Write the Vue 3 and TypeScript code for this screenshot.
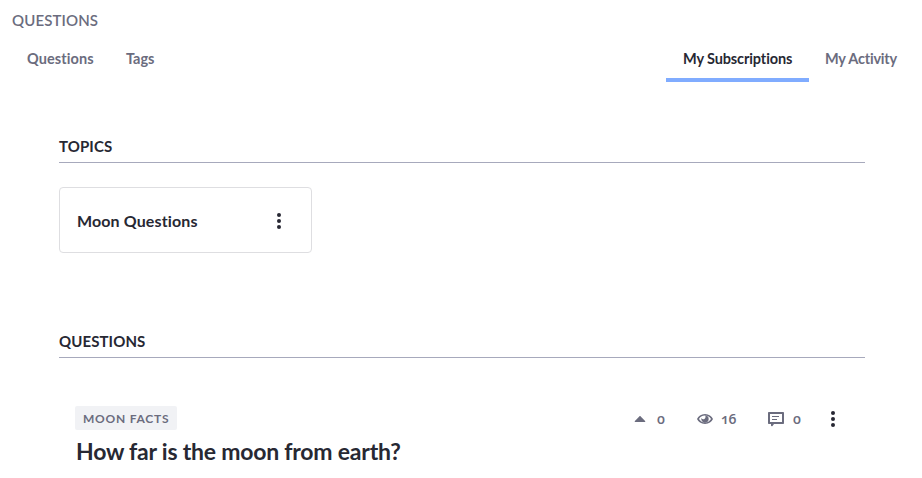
<script setup lang="ts">
interface Tab { label: string; id: string; active?: boolean }

const leftTabs: Tab[] = [
  { label: 'Questions', id: 'questions' },
  { label: 'Tags', id: 'tags' },
]
const rightTabs: Tab[] = [
  { label: 'My Subscriptions', id: 'subscriptions', active: true },
  { label: 'My Activity', id: 'activity' },
]
const topics: string[] = ['Moon Questions']
const question = {
  topic: 'MOON FACTS',
  title: 'How far is the moon from earth?',
  votes: 0,
  views: 16,
  answers: 0,
}
</script>

<template>
  <main class="page">
    <h1 class="app-title">QUESTIONS</h1>
    <nav class="tabs">
      <a v-for="t in leftTabs" :key="t.id" class="tab" :class="t.id">{{ t.label }}</a>
      <i class="spacer"></i>
      <a v-for="t in rightTabs" :key="t.id" class="tab" :class="[t.id, { active: t.active }]">{{ t.label }}</a>
    </nav>

    <section class="section">
      <h2 class="heading">TOPICS</h2>
      <article v-for="topic in topics" :key="topic" class="card">
        <strong>{{ topic }}</strong>
        <svg class="icon" viewBox="0 0 16 16"><circle cx="8" cy="2" r="2" /><circle cx="8" cy="8" r="2" /><circle cx="8" cy="14" r="2" /></svg>
      </article>
    </section>

    <section class="section questions-section">
      <h2 class="heading">QUESTIONS</h2>
      <article class="question">
        <div class="meta">
          <span class="label">{{ question.topic }}</span>
          <div class="stats">
            <span class="stat votes">
              <svg class="icon" viewBox="0 0 16 16"><path d="M7.300 5.400 2.900 9.900c-.4.5-.2 1.100.5 1.100h9.200c.7 0 .9-.6.5-1.100L8.700 5.400c-.4-.5-1-.5-1.400 0Z" /></svg>
              <span class="num">{{ question.votes }}</span>
            </span>
            <span class="stat views">
              <svg class="icon" viewBox="0 0 16 16"><path fill-rule="evenodd" d="M8 3C4 3 1.400 5.200 0 8c1.400 2.800 4 5 8 5s6.600-2.200 8-5c-1.400-2.800-4-5-8-5Zm0 8.400C5 11.400 3.200 10 2 8 3.200 6 5 4.600 8 4.600S12.800 6 14 8c-1.200 2-3 3.400-6 3.400Z" /><path d="M8.200 4.300a3.700 3.700 0 1 1-3.800 2.800c.7 1.200 2 1.500 3 .9 1.100-.7 1.500-2.100.8-3.700Z" /></svg>
              <span class="num">{{ question.views }}</span>
            </span>
            <span class="stat answers">
              <svg class="icon" viewBox="0 0 16 16"><path fill-rule="evenodd" d="M1 1h14c.6 0 1 .4 1 1v10c0 .6-.4 1-1 1H6l-1.500 2c-.5.700-1.500.300-1.500-.500V13H1c-.6 0-1-.4-1-1V2c0-.6.4-1 1-1Zm1 2v8h12V3H2Z" /><path d="M4 5h7v1H4zM4 8h5v1H4z" /></svg>
              <span class="num">{{ question.answers }}</span>
            </span>
            <svg class="icon more" viewBox="0 0 16 16"><circle cx="8" cy="2" r="2" /><circle cx="8" cy="8" r="2" /><circle cx="8" cy="14" r="2" /></svg>
          </div>
        </div>
        <h3 class="title">{{ question.title }}</h3>
      </article>
    </section>
  </main>
</template>

<style>
body { margin: 0; background: #fff; overflow: hidden; }
</style>

<style scoped>
.page { height: 478px; overflow: hidden; font-family: Lato, "Open Sans", sans-serif; font-variant-ligatures: none; color: #272833; }
.page * { box-sizing: border-box; }
h1, h2, h3 { margin: 0; }
.icon { display: block; width: 16px; height: 16px; flex: none; fill: currentColor; }
.app-title { height: 40px; padding-left: 12px; font-size: 15px; line-height: 40px; font-weight: 600; letter-spacing: .12px; color: #6b6c7e; }
.tabs { height: 42px; display: flex; padding: 0 9px 0 11px; }
.tab { display: block; padding: 0 16px; font-size: 14.5px; line-height: 38px; font-weight: 700; color: #6b6c7e; white-space: nowrap; border-bottom: 4px solid transparent; }
.questions { width: 98px; letter-spacing: .08px; }
.tags { width: 62px; padding-left: 17px; }
.spacer { flex: 1; }
.subscriptions { width: 143px; padding-left: 17px; letter-spacing: -.12px; }
.activity { width: 104px; letter-spacing: -.2px; }
.active { color: #272833; border-color: #80acff; }
.section { margin: 49px 57px 0 59px; }
.heading { height: 32px; border-bottom: 1px solid #a7a9bc; font-size: 15px; line-height: 30px; font-weight: 700; letter-spacing: .1px; }
.card { width: 253px; height: 66px; margin-top: 24px; padding: 2px 24px 0 17px; border: 1px solid #dedee1; border-radius: 4px; display: flex; align-items: center; justify-content: space-between; font-size: 16px; line-height: 24px; letter-spacing: .12px; }
.questions-section { margin-top: 73px; }
.question { padding: 48px 24px 0 16px; }
.meta { display: flex; justify-content: space-between; height: 24px; }
.label { width: 102px; height: 24px; padding-left: 8px; background: #f1f2f5; border-radius: 2px; color: #6b6c7e; font-size: 12px; line-height: 25px; font-weight: 700; letter-spacing: .75px; white-space: nowrap; }
.stats, .stat { display: flex; align-items: center; }
.stats { padding-top: 2px; color: #6b6c7e; }
.num { width: 16px; margin-left: 8px; font-family: "Open Sans", sans-serif; font-size: 14px; line-height: 20px; font-weight: 600; font-variant-numeric: oldstyle-nums; letter-spacing: -.4px; }
.votes .num, .answers .num { padding-left: 1px; }
.votes { width: 65px; }
.views { width: 71px; }
.answers { width: 57px; }
.more { color: #272833; }
.title { padding-left: 1px; font-size: 23px; line-height: 30px; margin-top: 6px; white-space: nowrap; letter-spacing: -.22px; }
</style>
